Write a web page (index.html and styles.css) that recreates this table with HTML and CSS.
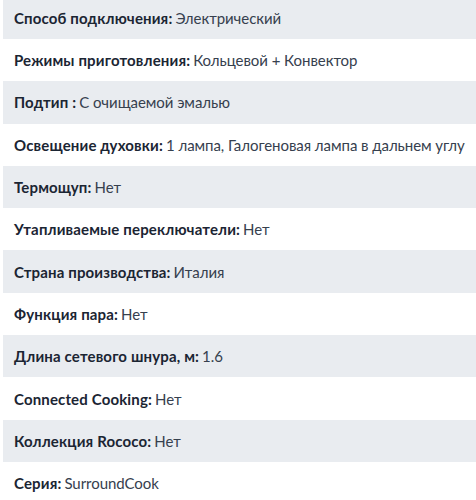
FILE: index.html
```html
<!DOCTYPE html>
<html lang="ru">
<head>
<meta charset="utf-8">
<link rel="stylesheet" href="styles.css">
</head>
<body>
<ul class="specs">
  <li class="spec"><span class="label">Способ подключения:</span> <span class="value">Электрический</span></li>
  <li class="spec"><span class="label">Режимы приготовления:</span> <span class="value">Кольцевой + Конвектор</span></li>
  <li class="spec"><span class="label">Подтип :</span> <span class="value">С очищаемой эмалью</span></li>
  <li class="spec"><span class="label">Освещение духовки:</span> <span class="value">1 лампа, Галогеновая лампа в дальнем углу</span></li>
  <li class="spec"><span class="label">Термощуп:</span> <span class="value">Нет</span></li>
  <li class="spec"><span class="label">Утапливаемые переключатели:</span> <span class="value">Нет</span></li>
  <li class="spec"><span class="label">Страна производства:</span> <span class="value">Италия</span></li>
  <li class="spec"><span class="label">Функция пара:</span> <span class="value">Нет</span></li>
  <li class="spec"><span class="label">Длина сетевого шнура, м:</span> <span class="value">1.6</span></li>
  <li class="spec"><span class="label">Connected Cooking:</span> <span class="value">Нет</span></li>
  <li class="spec"><span class="label">Коллекция Rococo:</span> <span class="value">Нет</span></li>
  <li class="spec"><span class="label">Серия:</span> <span class="value">SurroundCook</span></li>
</ul>
</body>
</html>
```
FILE: styles.css
```css
html, body {
  margin: 0;
  padding: 0;
  background: #ffffff;
}
body {
  font-family: "Lato", "Noto Sans", sans-serif;
  font-size: 15px;
  color: #1b2533;
  overflow: hidden;
}
.specs {
  list-style: none;
  margin: -3.3px 0 0 3px;
  padding: 0;
  display: flex;
  flex-direction: column;
}
.spec {
  height: 42.3px;
  display: flex;
  align-items: center;
  gap: 3px;
  padding: 0 0 0 11px;
  white-space: nowrap;
}
.spec:nth-child(odd) {
  background: #e9ecf0;
}
.label {
  font-weight: 700;
  color: #1b2533;
  letter-spacing: 0.15px;
}
.value {
  color: #36404e;
  letter-spacing: -0.05px;
}
```
